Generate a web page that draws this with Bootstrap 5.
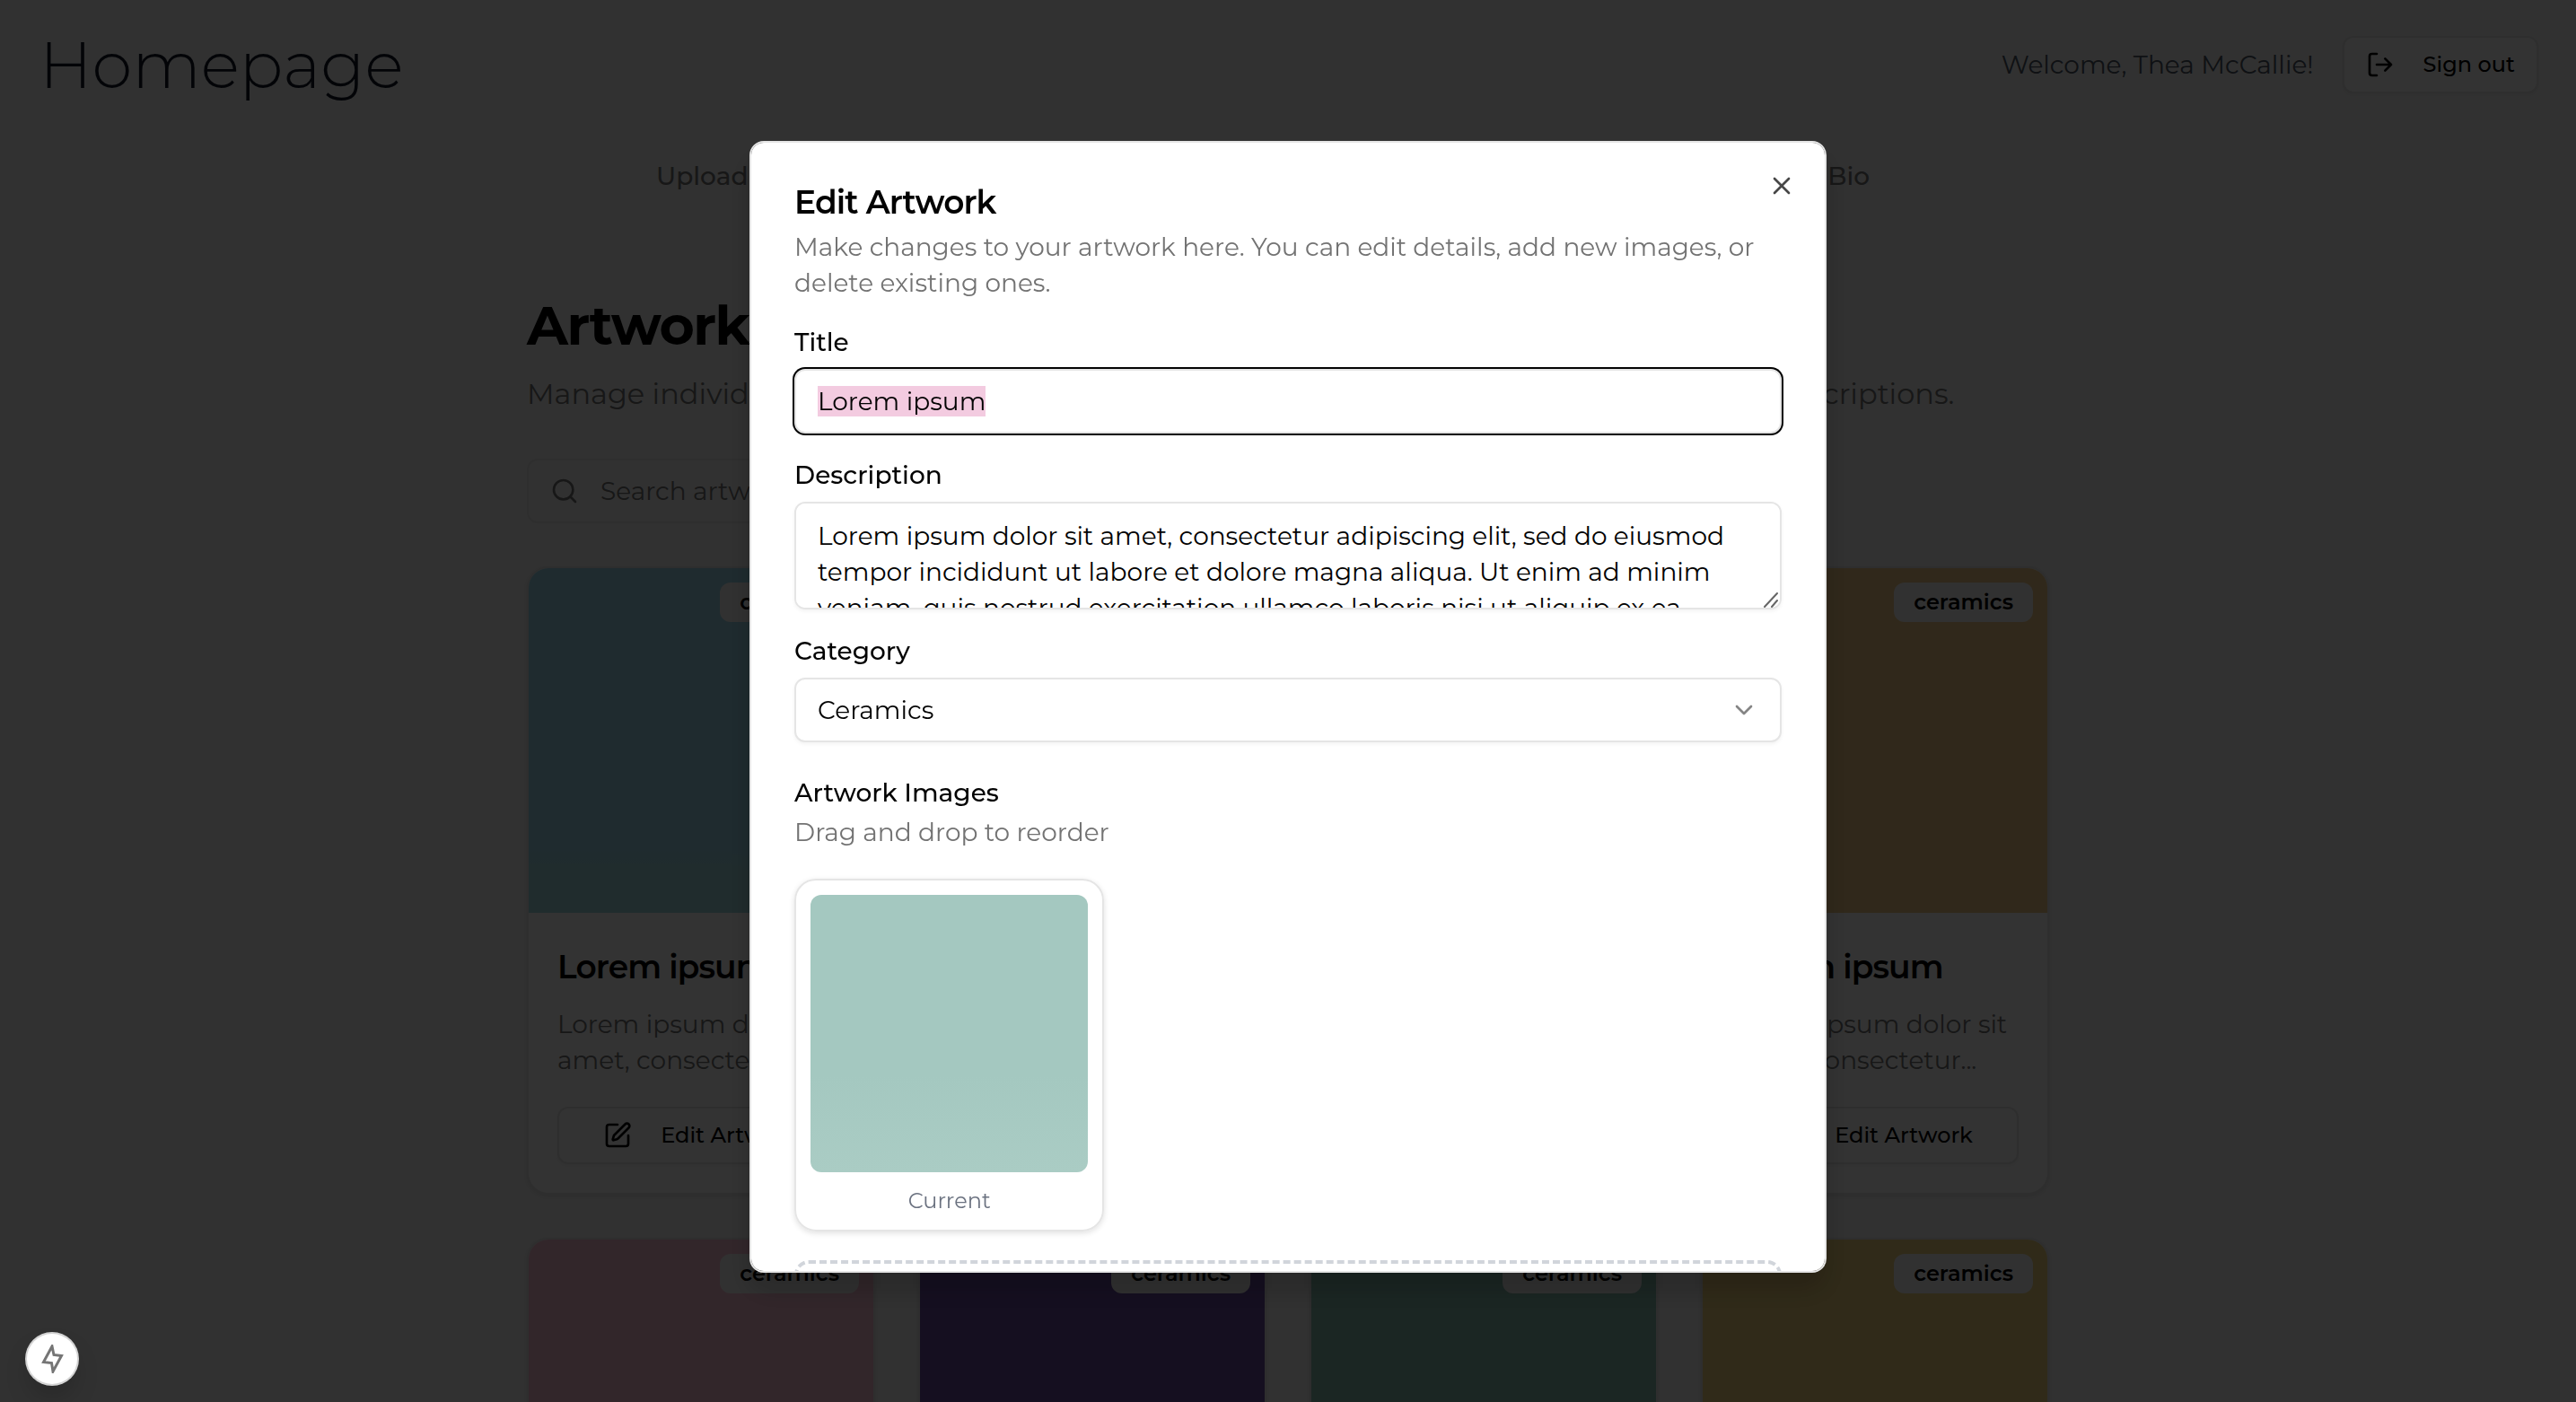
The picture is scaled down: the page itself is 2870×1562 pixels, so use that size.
<!DOCTYPE html>
<html lang="en">
<head>
<meta charset="utf-8">
<meta name="viewport" content="width=device-width, initial-scale=1">
<title>Homepage</title>
<link href="https://cdn.jsdelivr.net/npm/bootstrap@5.3.0/dist/css/bootstrap.min.css" rel="stylesheet">
<style>
  :root { --ink: #030303; --muted: #737373; --line: #e5e5e5; --r: 12px; }
  body { font-family: Montserrat, Inter, "Open Sans", sans-serif; font-size: 28px; line-height: 40px; color: var(--ink); background: #f5f5f5; height: 100vh; overflow: hidden; }
  svg { fill: none; stroke: currentColor; stroke-width: 2; stroke-linecap: round; stroke-linejoin: round; flex: none; }
  .ico { width: 32px; height: 32px; }
  .site-head { height: 144px; padding: 0 42px 0 44px; }
  .brand { font-size: 72px; line-height: 80px; font-weight: 300; color: #111827; }
  .welcome { color: #4b5563; }
  .btn-plain { --bs-btn-font-size: 24px; --bs-btn-line-height: 32px; --bs-btn-font-weight: 500; --bs-btn-border-width: 2px; --bs-btn-border-radius: var(--r); --bs-btn-border-color: var(--line); --bs-btn-bg: #fff; --bs-btn-color: var(--ink); --bs-btn-padding-x: 24px; --bs-btn-padding-y: 14px; box-shadow: 0 2px 4px rgba(0,0,0,.06); gap: 32px; }
  .site-nav { max-width: 1696px; margin: 32px auto 0; padding: 0 200px 0 144px; }
  .site-nav a { color: var(--muted); font-weight: 500; text-decoration: none; }
  .wrap { max-width: 1696px; margin: 111px auto 0; }
  h1 { font-size: 60px; line-height: 72px; font-weight: 700; letter-spacing: -.025em; }
  .sub { font-size: 32px; line-height: 56px; color: var(--muted); white-space: nowrap; margin: 12px 0 44px; }
  .finder { width: 768px; height: 72px; border: 2px solid var(--line); border-radius: var(--r); padding: 0 24px; gap: 24px; color: var(--muted); }
  .finder input { border: 0; background: none; outline: 0; }
  .finder input::placeholder { color: var(--muted); }
  .tiles { display: grid; grid-template-columns: repeat(4, 1fr); gap: 48px; }
  .tile { --bs-card-border-width: 2px; --bs-card-border-color: var(--line); --bs-card-border-radius: 24px; --bs-card-inner-border-radius: 22px; --bs-card-color: var(--ink); box-shadow: 0 2px 6px rgba(0,0,0,.1); overflow: hidden; }
  .art { aspect-ratio: 1; padding: 16px; text-align: right; }
  .art .badge { font-size: 24px; line-height: 28px; font-weight: 600; padding: 8px 22px; background: #f5f5f5; color: var(--ink); border-radius: var(--r); }
  .tile .card-body { padding: 32px; }
  .tile h2 { font-size: 36px; line-height: 56px; font-weight: 600; letter-spacing: -.025em; margin: 0 0 16px; }
  .tile p { color: var(--muted); margin: 0 0 32px; }
  .sky { background: linear-gradient(#9bd7e8 82%, #a0dadf 88%); }
  .gold { background: #f0c887; } .pink { background: #fabed2; } .violet { background: #694ba0; }
  .sage { background: #87beaf; } .sun { background: #f0d27d; }
  .modal-backdrop.show { opacity: .8; }
  .modal { --bs-modal-width: 1200px; overflow: hidden; }
  .modal-dialog { margin-top: 157px; margin-bottom: 0; }
  .modal-content { border: 2px solid var(--line); border-radius: 16px; padding: 48px; max-height: calc(100vh - 301px); overflow: hidden; color: var(--ink); box-shadow: 0 20px 30px rgba(0,0,0,.2); }
  .modal-title { font-size: 36px; line-height: 36px; font-weight: 600; letter-spacing: -.025em; margin-bottom: 12px; }
  .muted { color: var(--muted); }
  .shut { position: absolute; right: 32px; top: 32px; border: 0; background: none; padding: 0; line-height: 0; color: #474747; }
  .form-stack { gap: 32px; margin-top: 32px; }
  .form-label { display: block; font-weight: 500; line-height: 28px; margin-bottom: 16px; }
  .field { display: block; height: 72px; padding: 0 24px; font-size: 28px; line-height: 40px; color: var(--ink); background-color: #fff; border: 2px solid var(--line); border-radius: var(--r); box-shadow: 0 2px 4px rgba(0,0,0,.05); }
  .form-control.field:focus { border-color: var(--line); box-shadow: 0 0 0 2px var(--ink); color: var(--ink); }
  ::selection { background: #f3cbe0; color: var(--ink); }
  textarea.field { height: 120px; padding: 16px 24px; resize: none; scrollbar-width: none; }
  .grip { position: absolute; right: 4px; bottom: 2px; width: 16px; height: 18px; color: #666; }
  select.field { --bs-form-select-bg-img: url("data:image/svg+xml,%3Csvg xmlns='http://www.w3.org/2000/svg' viewBox='0 0 24 24' fill='none' stroke='%23858585' stroke-width='2' stroke-linecap='round' stroke-linejoin='round'%3E%3Cpath d='m6 9 6 6 6-6'/%3E%3C/svg%3E"); background-size: 32px; background-position: right 24px center; }
  .images-head { padding-top: 4px; gap: 4px; font-weight: 500; }
  .images-head .muted { font-weight: 400; }
  .gallery { display: grid; grid-template-columns: repeat(3, 1fr); gap: 32px; }
  .thumb { border: 2px solid var(--line); border-radius: 24px; padding: 16px; box-shadow: 0 2px 6px rgba(0,0,0,.12); }
  .thumb div { aspect-ratio: 1; border-radius: var(--r); background: linear-gradient(#a4c8c0 65%, #aaccc4); }
  .thumb figcaption { font-size: 24px; line-height: 32px; color: #6b7280; text-align: center; margin: 16px 0 0; }
  .drop { border: 4px dashed #d1d5db; border-radius: 16px; min-height: 200px; flex: none; }
  .bolt { position: fixed; left: 30px; bottom: 20px; width: 56px; height: 56px; border: 0; border-radius: 50%; background: #fff; color: #757575; box-shadow: 0 0 0 2px #d4d4d4, 0 16px 32px -8px rgba(0,0,0,.3); z-index: 1100; padding: 0; line-height: 0; }
  .bolt svg { width: 25px; height: 32px; stroke-width: 3; stroke-linejoin: miter; stroke-miterlimit: 10; overflow: hidden; }
</style>
</head>
<body>
<svg class="d-none">
  <symbol id="pen" viewBox="0 0 24 24"><path d="M12 3H5a2 2 0 0 0-2 2v14a2 2 0 0 0 2 2h14a2 2 0 0 0 2-2v-7"/><path d="M18.375 2.625a1 1 0 0 1 3 3l-9.013 9.014a2 2 0 0 1-.853.505l-2.873.84a.5.5 0 0 1-.62-.62l.84-2.873a2 2 0 0 1 .506-.852z"/></symbol>
</svg>
<header class="site-head d-flex align-items-center justify-content-between">
  <div class="brand">Homepage</div>
  <div class="d-flex align-items-center gap-4">
    <span class="welcome">Welcome, Thea McCallie!</span>
    <button class="btn btn-plain d-flex align-items-center ms-2"><svg class="ico" viewBox="0 0 24 24"><path d="M9 21H5a2 2 0 0 1-2-2V5a2 2 0 0 1 2-2h4M16 17l5-5-5-5M21 12H9"/></svg>Sign out</button>
  </div>
</header>
<nav class="site-nav d-flex justify-content-between"><a href="#">Upload</a><a href="#">Bio</a></nav>
<main class="wrap">
  <h1 class="mb-0">Artworks</h1>
  <p class="sub">Manage individual artworks and their details, including pictures, categories, labels and descriptions.</p>
  <div class="finder d-flex align-items-center mb-5">
    <svg class="ico" viewBox="0 0 24 24"><circle cx="11" cy="11" r="8"/><path d="m21 21-4.3-4.3"/></svg>
    <input class="flex-grow-1 p-0" type="search" placeholder="Search artworks..." aria-label="Search artworks">
  </div>
  <div class="tiles">
    <article class="card tile"><div class="art sky"><span class="badge">ceramics</span></div><div class="card-body"><h2>Lorem ipsum</h2><p>Lorem ipsum dolor sit amet, consectetur...</p><button class="btn btn-plain w-100 d-flex align-items-center justify-content-center"><svg class="ico"><use href="#pen"/></svg>Edit Artwork</button></div></article>
    <article class="card tile"><div class="art pink"></div></article>
    <article class="card tile"><div class="art sage"></div></article>
    <article class="card tile"><div class="art gold"><span class="badge">ceramics</span></div><div class="card-body"><h2>Lorem ipsum</h2><p>Lorem ipsum dolor sit amet, consectetur...</p><button class="btn btn-plain w-100 d-flex align-items-center justify-content-center"><svg class="ico"><use href="#pen"/></svg>Edit Artwork</button></div></article>
    <article class="card tile"><div class="art pink"><span class="badge">ceramics</span></div></article>
    <article class="card tile"><div class="art violet"><span class="badge">ceramics</span></div></article>
    <article class="card tile"><div class="art sage"><span class="badge">ceramics</span></div></article>
    <article class="card tile"><div class="art sun"><span class="badge">ceramics</span></div></article>
  </div>
</main>
<div class="modal-backdrop show"></div>
<div class="modal d-block" role="dialog" aria-modal="true" aria-labelledby="dlgTitle">
  <div class="modal-dialog">
    <form class="modal-content">
      <button type="button" class="shut" aria-label="Close"><svg class="ico" viewBox="0 0 24 24"><path d="M18 6 6 18M6 6l12 12"/></svg></button>
      <h2 class="modal-title" id="dlgTitle">Edit Artwork</h2>
      <p class="muted mb-0">Make changes to your artwork here. You can edit details, add new images, or delete existing ones.</p>
      <div class="form-stack d-flex flex-column">
        <div><label class="form-label" for="fTitle">Title</label><input class="form-control field" id="fTitle" value="Lorem ipsum" autofocus></div>
        <div class="position-relative"><label class="form-label" for="fDesc">Description</label><textarea class="form-control field" id="fDesc">Lorem ipsum dolor sit amet, consectetur adipiscing elit, sed do eiusmod tempor incididunt ut labore et dolore magna aliqua. Ut enim ad minim veniam, quis nostrud exercitation ullamco laboris nisi ut aliquip ex ea commodo consequat.</textarea><svg class="grip" viewBox="0 0 16 18"><path d="M1 17 15 2M9 17l6-7"/></svg></div>
        <div><label class="form-label" for="fCat">Category</label><select class="form-select field" id="fCat"><option>Ceramics</option></select></div>
        <div class="images-head d-flex flex-column">
          <div>Artwork Images</div>
          <div class="muted">Drag and drop to reorder</div>
        </div>
        <div class="gallery"><figure class="thumb m-0"><div></div><figcaption>Current</figcaption></figure></div>
        <div class="drop"></div>
      </div>
    </form>
  </div>
</div>
<button class="bolt" aria-label="Developer tools"><svg viewBox="0 0 25 32"><path d="M12 2 2.500 19.500l9 1L13 30l9.500-17.500-8.500-1z"/></svg></button>
<script src="https://cdn.jsdelivr.net/npm/bootstrap@5.3.0/dist/js/bootstrap.bundle.min.js"></script>
<script>
  const title = document.getElementById('fTitle');
  title.focus({ preventScroll: true });
  title.select();
</script>
</body>
</html>
